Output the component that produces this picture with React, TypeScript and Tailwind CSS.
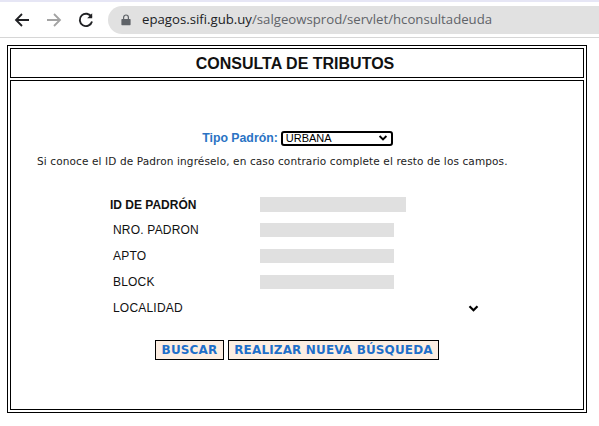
const arial = "font-['Liberation_Sans',Arial,sans-serif]";
const dejavu = "font-['DejaVu_Sans',Verdana,sans-serif]";

function Chevron({ className }: { className: string }) {
  return (
    <svg viewBox="0 0 10 7" className={className} fill="none" stroke="#000" strokeWidth="2.2">
      <path d="M1 1.2 5 5.2 9 1.2" />
    </svg>
  );
}

function Row({ label, width, bold }: { label: string; width: string; bold?: boolean }) {
  return (
    <div className="flex h-[26px] items-center">
      <div className={`${arial} w-[153px] text-[12px] text-[#111] ${bold ? "font-bold pl-[3px] pt-[1px]" : "pl-[6px] tracking-[0.2px]"}`}>{label}</div>
      <div className={`${width} ${bold ? "h-[15px]" : "h-[14px]"} bg-[#e0e0e0]`} />
    </div>
  );
}

export default function App() {
  return (
    <div className={`${arial} flex h-[426px] w-[599px] flex-col overflow-hidden bg-white`}>
      <div className="h-[2px] bg-[#e6e6f5]" />
      <div className="flex h-[36px] items-center border-b border-[#d6d6d6] bg-white">
        <div className="flex w-[108px] items-center pl-[14px]">
          <svg width="16" height="16" viewBox="0 0 16 16" fill="none" stroke="#202124" strokeWidth="1.8">
            <path d="M15 8H2M8 2 2 8l6 6" />
          </svg>
          <svg className="ml-[16px]" width="16" height="16" viewBox="0 0 16 16" fill="none" stroke="#a3a3a3" strokeWidth="1.8">
            <path d="M1 8h13M8 2l6 6-6 6" />
          </svg>
          <svg className="ml-[16px]" width="16" height="16" viewBox="0 0 16 16" fill="none" stroke="#202124" strokeWidth="1.9">
            <path d="M13.5 5A6.2 6.2 0 1 0 14 9.5" />
            <path d="M14.2 1.2v5h-5z" fill="#202124" stroke="none" />
          </svg>
        </div>
        <div className="flex h-[28px] flex-1 items-center rounded-l-full bg-[#e1e1e1] pl-[13px]">
          <svg width="10" height="12" viewBox="0 0 10 12">
            <path d="M1 5h8a.6.6 0 0 1 .6.6v5a.6.6 0 0 1-.6.6H1a.6.6 0 0 1-.6-.6v-5A.6.6 0 0 1 1 5z" fill="#5f6368" />
            <path d="M2.6 5V3.4a2.4 2.4 0 0 1 4.8 0V5" fill="none" stroke="#5f6368" strokeWidth="1.2" />
          </svg>
          <div className="ml-[11px] font-['Open_Sans',sans-serif] text-[13.2px] text-[#5f6368]">
            <span className="text-[#202124]">epagos.sifi.gub.uy</span>/salgeowsprod/servlet/hconsultadeuda
          </div>
        </div>
      </div>

      <div className="ml-[7px] mt-[7px] flex h-[368px] w-[580px] flex-col gap-[2px] border border-black p-[2px]">
        <div className="flex h-[30px] items-center justify-center border border-black pr-[4px] pt-[1px]">
          <div className="text-[16px] font-bold leading-none text-[#111]">CONSULTA DE TRIBUTOS</div>
        </div>
        <div className="flex flex-1 flex-col border border-black">
          <div className="mt-[48px] flex h-[18px] items-center justify-center pl-[1px]">
            <span className="text-[12.3px] font-bold text-[#2a73c4]">Tipo Padrón:</span>
            <div className="ml-[3px] flex h-[15px] w-[112px] items-center justify-between rounded-[3px] border-2 border-black pl-[3px] pr-[3px] text-[11px] leading-none text-black">
              URBANA
              <Chevron className="h-[6px] w-[10px]" />
            </div>
          </div>
          <div className={`${dejavu} mt-[5px] pl-[26px] text-[10.5px] leading-[18px] tracking-[0.12px] text-[#222]`}>
            Si conoce el ID de Padron ingréselo, en caso contrario complete el resto de los campos.
          </div>
          <div className="ml-[96px] mt-[21px] flex flex-col">
            <Row label="ID DE PADRÓN" width="w-[146px]" bold />
            <Row label="NRO. PADRON" width="w-[134px]" />
            <Row label="APTO" width="w-[134px]" />
            <Row label="BLOCK" width="w-[134px]" />
            <div className="flex h-[26px] w-[372px] items-center justify-between">
              <div className="pl-[6px] text-[12px] tracking-[0.2px] text-[#111]">LOCALIDAD</div>
              <Chevron className="h-[7px] w-[11px]" />
            </div>
          </div>
          <div className="ml-[144px] mt-[19px] flex gap-[4px]">
            <div className={`${dejavu} flex h-[20px] w-[69px] items-center justify-center border border-black bg-[#fdeee2] text-[12px] font-bold tracking-[0.15px] text-[#1f6fc9]`}>BUSCAR</div>
            <div className={`${dejavu} flex h-[20px] w-[211px] items-center justify-center border border-black bg-[#fdeee2] text-[12px] font-bold tracking-[0.15px] text-[#1f6fc9]`}>REALIZAR NUEVA BÚSQUEDA</div>
          </div>
        </div>
      </div>
    </div>
  );
}
